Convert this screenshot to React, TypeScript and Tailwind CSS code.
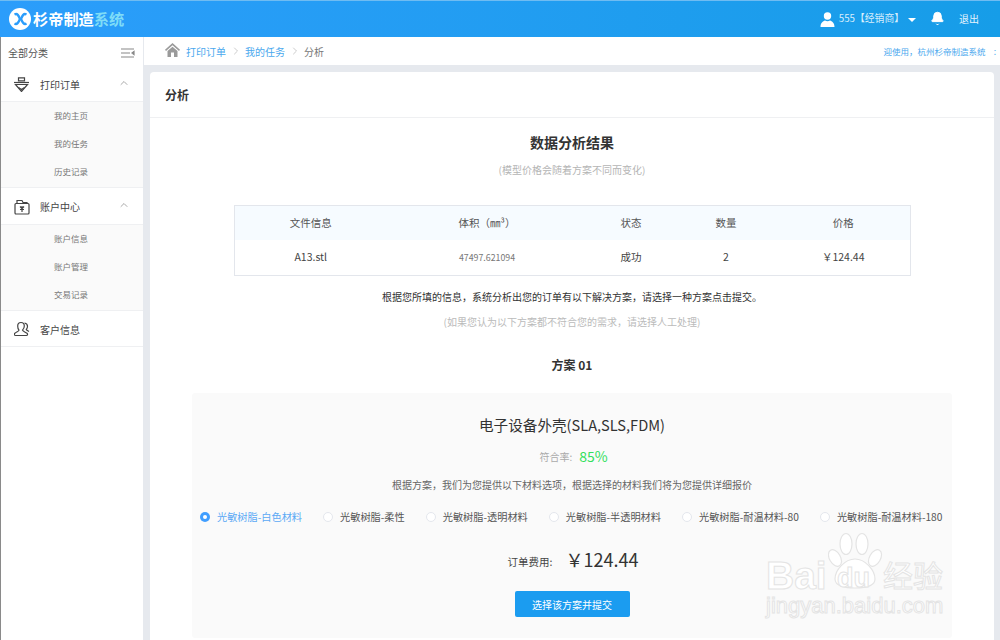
import React from "react";
import { ChevronUp, ChevronRight, Bell } from "lucide-react";

const font = { fontFamily: '"Noto Sans CJK SC", "Noto Sans", sans-serif' };

function SubItem({ label }: { label: string }) {
  return <div className="h-[28.33px] flex items-center pl-[53px] pb-[2px] text-[8.5px] text-[#777]">{label}</div>;
}

function OrderIcon() {
  return (
    <svg width="15" height="15" viewBox="0 0 15 15" fill="none" stroke="#444" strokeWidth="1.200">
      <path d="M4.500 .8h6v3h-6z" />
      <path d="M0 5.500h15" />
      <path d="M1.500 7.500h12L7.500 14.500z" />
      <path d="M4.500 10.500l3 2 3-2" />
    </svg>
  );
}
function WalletIcon() {
  return (
    <svg width="16" height="16" viewBox="0 0 16 16" fill="none" stroke="#444" strokeWidth="1.200">
      <rect x="1" y="4.500" width="14" height="10.500" rx="1" />
      <path d="M3 4.500V1.500h5l1 2h4v1" />
      <path d="M8 7v6M6 7.500l2 2.200 2-2.200M6 10.500h4" />
    </svg>
  );
}
function UsersIcon() {
  return (
    <svg width="16" height="16" viewBox="0 0 16 16" fill="none" stroke="#444" strokeWidth="1.200">
      <path d="M7 1.500c2.200 0 3.300 1.600 3.300 3.500S9.200 8.500 8.500 9.200c.3 1.300 2.500 1.600 4.500 3 1 .8.5 2.300-.5 2.300H1.500c-1.200 0-1.600-1.500-.6-2.300 1.800-1.300 3.800-1.700 4.100-3C4.300 8.500 3.700 7 3.700 5c0-1.900 1.100-3.500 3.300-3.500z" />
      <path d="M10.500 2c1.800.3 3 1.500 3 3.300 0 1.500-.5 2.500-1.200 3.200.5 1 1.500 1.300 2.700 2" />
    </svg>
  );
}

function Radio({ label, on, gap }: { label: string; on?: boolean; gap: string }) {
  return (
    <div className={`flex items-center shrink-0 ${gap}`}>
      {on ? (
        <span className="w-[10px] h-[10px] rounded-full bg-[#409eff] flex items-center justify-center mr-[7px]">
          <span className="w-[4px] h-[4px] rounded-full bg-white" />
        </span>
      ) : (
        <span className="w-[10px] h-[10px] rounded-full bg-white border border-[#e4e7ed] mr-[7px]" />
      )}
      <span className={`text-[10.2px] leading-none whitespace-nowrap ${on ? "text-[#5aa9f5]" : "text-[#555]"}`}>{label}</span>
    </div>
  );
}

export default function App() {
  return (
    <div className="w-[1000px] h-[640px] overflow-hidden relative bg-[#e6e9ee] flex flex-col" style={font}>
      <header className="h-[37px] shrink-0 bg-gradient-to-r from-[#2b9dfb] to-[#169de8] border-t border-[#6fbcf2] flex items-center pl-[9px] pr-[21px] text-white">
        <div className="w-[22px] h-[22px] rounded-full bg-white flex items-center justify-center">
          <svg width="15" height="14" viewBox="0 0 15 14" fill="none" stroke="#2b9dfb" strokeWidth="2.400">
            <path d="M1.500 2.500c3-1.500 4 1 5.500 4.500-1.500 3.500-3 6-5.500 4.500" />
            <path d="M13.500 2.500c-3-1.500-4 1-5.500 4.500 1.500 3.500 3 6 5.500 4.500" />
          </svg>
        </div>
        <div className="ml-[2px] text-[15.2px] font-bold leading-none">
          杉帝制造<span className="text-[#7fdcf7]">系统</span>
        </div>
        <div className="ml-auto flex items-center">
          <svg width="15" height="15" viewBox="0 0 14 15" fill="white">
            <circle cx="7" cy="4" r="3.700" />
            <path d="M0 15c0-4 2.500-6 4.500-6.500 1.500 1 3.500 1 5 0C11.500 9 14 11 14 15z" />
          </svg>
          <span className="ml-[4px] text-[9.8px] text-[#d8eefc] leading-none whitespace-nowrap">555【经销商】</span>
          <span className="ml-[4px] w-0 h-0 border-x-[4px] border-x-transparent border-t-[4px] border-t-white mt-[2px]" />
          <Bell className="ml-[14px] mb-[1px]" size={15} fill="white" stroke="white" strokeWidth={1.500} />
          <span className="ml-[14px] text-[10px] text-[#e4f3fd] leading-none">退出</span>
        </div>
      </header>

      <div className="flex-1 flex min-h-0">
        <aside className="w-[144px] shrink-0 bg-white border-l border-[#8a8a8a] border-r border-r-[#e6e9ee]">
          <div className="h-[31px] flex items-center justify-between pl-[7px] pr-[8px] text-[10px] text-[#555]">
            <span>全部分类</span>
            <svg width="14" height="10" viewBox="0 0 14 10" fill="none" stroke="#888" strokeWidth="1.200">
              <path d="M0 1h13M0 5h9M0 9h13" />
              <path d="M13 3.500L11 5l2 1.500z" fill="#888" />
            </svg>
          </div>
          <div className="h-[34px] flex items-center pl-[13px] pr-[13px] border-b border-[#eff0f2]">
            <OrderIcon />
            <span className="ml-[11px] text-[10px] text-[#444]">打印订单</span>
            <ChevronUp className="ml-auto mb-[4px]" size={12} color="#aaa" />
          </div>
          <div className="bg-[#fafafa] border-b border-[#eff0f2]">
            <SubItem label="我的主页" />
            <SubItem label="我的任务" />
            <SubItem label="历史记录" />
          </div>
          <div className="h-[37px] flex items-center pl-[13px] pr-[13px] pt-[2px] border-b border-[#eff0f2]">
            <WalletIcon />
            <span className="ml-[10px] text-[10px] text-[#444]">账户中心</span>
            <ChevronUp className="ml-auto mb-[4px]" size={12} color="#aaa" />
          </div>
          <div className="bg-[#fafafa] border-b border-[#eff0f2]">
            <SubItem label="账户信息" />
            <SubItem label="账户管理" />
            <SubItem label="交易记录" />
          </div>
          <div className="h-[36px] flex items-center pl-[13px] pt-[2px] border-b border-[#eff0f2]">
            <UsersIcon />
            <span className="ml-[10px] text-[10px] text-[#444]">客户信息</span>
          </div>
        </aside>

        <main className="flex-1 min-w-0 flex flex-col">
          <div className="h-[28px] shrink-0 bg-white flex items-center pl-[21px] pr-[4px] text-[10px]">
            <svg width="15" height="14" viewBox="0 0 15 14" fill="#9a9a9a" className="mb-[2px]">
              <path d="M7.500 0L15 6.800l-1 1.100L7.500 2.200 1 7.900 0 6.800z" />
              <path d="M2.500 8l5-4.300 5 4.300v6H9V9.500H6V14H2.500z" />
            </svg>
            <span className="ml-[6px] text-[#4aa8ee]">打印订单</span>
            <ChevronRight className="mx-[3.500px]" size={12} color="#ccc" />
            <span className="text-[#4aa8ee]">我的任务</span>
            <ChevronRight className="mx-[3.500px]" size={12} color="#ccc" />
            <span className="text-[#777]">分析</span>
            <span className="ml-auto text-[8.5px] text-[#4aa8ee] whitespace-nowrap">迎使用，杭州杉帝制造系统</span>
            <span className="ml-[8px] text-[8.5px] text-[#4aa8ee]">:</span>
          </div>

          <div className="flex-1 min-h-0 pt-[7px] pl-[6px] pr-[6px]">
            <div className="bg-white rounded-t-[4px] h-full">
              <div className="h-[46px] flex items-center pl-[15px] border-b border-[#eff0f2] text-[12px] font-bold text-[#333]">分析</div>
              <div className="flex flex-col items-center relative">
                <h1 className="mt-[12px] text-[14px] leading-[24px] font-bold text-[#333]">数据分析结果</h1>
                <p className="mt-[8px] text-[10px] leading-[16px] text-[#b5b5b5]">(模型价格会随着方案不同而变化)</p>

                <table className="mt-[27px] w-[677px] border border-[#e3e6ec] text-center table-fixed border-collapse">
                  <thead>
                    <tr className="h-[34px] bg-[#f6fbff] text-[10.5px] text-[#555]">
                      <th className="font-normal w-[153px]">文件信息</th>
                      <th className="font-normal w-[200px]">体积（㎜³）</th>
                      <th className="font-normal w-[88px]">状态</th>
                      <th className="font-normal w-[102px]">数量</th>
                      <th className="font-normal">价格</th>
                    </tr>
                  </thead>
                  <tbody>
                    <tr className="h-[36px] text-[10.5px] text-[#444]">
                      <td>A13.stl</td>
                      <td className="text-[8.8px] text-[#777]">47497.621094</td>
                      <td>成功</td>
                      <td>2</td>
                      <td>￥124.44</td>
                    </tr>
                  </tbody>
                </table>

                <p className="mt-[13px] text-[10px] leading-[16px] text-[#333]">根据您所填的信息，系统分析出您的订单有以下解决方案，请选择一种方案点击提交。</p>
                <p className="mt-[9px] text-[10px] leading-[16px] text-[#bbb]">(如果您认为以下方案都不符合您的需求，请选择人工处理)</p>
                <h2 className="mt-[26px] text-[12px] leading-[18px] font-bold text-[#333]">方案 01</h2>

                <section className="mt-[19px] w-[760px] h-[245px] bg-[#fafafa] rounded-[3px] flex flex-col items-center">
                  <div className="mt-[21px] text-[14.6px] leading-[22px] text-[#333]">电子设备外壳(SLA,SLS,FDM)</div>
                  <div className="mt-[9px] ml-[3px] flex items-center h-[22px]">
                    <span className="text-[10px] text-[#aaa]">符合率:</span>
                    <span className="ml-[7px] text-[14px] text-[#33e05e]">85%</span>
                  </div>
                  <p className="mt-[10px] text-[10px] leading-[16px] text-[#666]">根据方案，我们为您提供以下材料选项，根据选择的材料我们将为您提供详细报价</p>
                  <div className="mt-[19px] self-start pl-[8px] flex items-center">
                    <Radio label="光敏树脂-白色材料" on gap="mr-[21px]" />
                    <Radio label="光敏树脂-柔性" gap="mr-[21px]" />
                    <Radio label="光敏树脂-透明材料" gap="mr-[21px]" />
                    <Radio label="光敏树脂-半透明材料" gap="mr-[21px]" />
                    <Radio label="光敏树脂-耐温材料-80" gap="mr-[21px]" />
                    <Radio label="光敏树脂-耐温材料-180" gap="" />
                  </div>
                  <div className="mt-[24px] ml-[2px] flex items-center">
                    <span className="text-[10.500px] text-[#444] mt-[6px]">订单费用:</span>
                    <span className="ml-[13px] text-[18px] leading-[26px] text-[#333]">￥124.44</span>
                  </div>
                  <button className="mt-[19px] w-[115px] h-[26px] rounded-[2px] bg-[#1b9cf0] text-white text-[10px]">选择该方案并提交</button>
                </section>
              </div>
            </div>
          </div>
        </main>
      </div>

      <div className="absolute left-[766px] top-[532px] w-[190px] h-[90px] pointer-events-none select-none" style={{ fontFamily: '"Liberation Sans", sans-serif' }}>
        <svg className="absolute left-[62px] top-0" width="56" height="58" viewBox="0 0 56 58" fill="#fff" stroke="#e4e4e4" strokeWidth="1.200">
          <ellipse cx="18" cy="12" rx="6" ry="10.500" />
          <ellipse cx="34" cy="12" rx="6" ry="10.500" />
          <ellipse cx="7" cy="26" rx="5.500" ry="9" transform="rotate(-30 7 26)" />
          <ellipse cx="47" cy="26" rx="5.500" ry="9" transform="rotate(30 47 26)" />
          <path d="M27 27c10 0 20 11 20 20 0 7-10 9-20 9S7 54 7 47c0-9 10-20 20-20z" />
        </svg>
        <span className="absolute left-0 top-[27px] text-[39px] leading-[34px] font-bold text-white [-webkit-text-stroke:1px_#e4e4e4]">Bai</span>
        <span className="absolute left-[71px] top-[34px] text-[27px] leading-[24px] font-bold text-white [-webkit-text-stroke:1px_#e4e4e4]">du</span>
        <span className="absolute left-[117px] top-[24px] text-[30px] leading-[36px] text-white [-webkit-text-stroke:1px_#e4e4e4]" style={font}>经验</span>
        <span className="absolute left-0 top-[63px] text-[22px] leading-none text-white [-webkit-text-stroke:1px_#e4e4e4] whitespace-nowrap">jingyan.baidu.com</span>
      </div>
    </div>
  );
}
